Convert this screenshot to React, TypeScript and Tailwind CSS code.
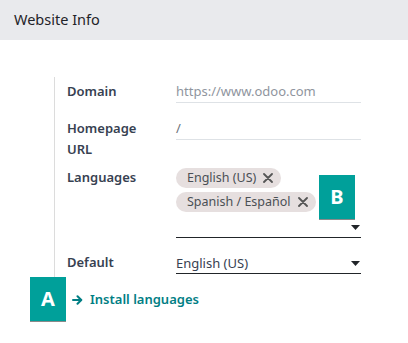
function Caret() {
  return (
    <svg width="9" height="5" viewBox="0 0 9 5" className="shrink-0">
      <path d="M0 0h9L4.5 5z" fill="#212529" />
    </svg>
  );
}

function Tag({ label }: { label: string }) {
  return (
    <span className="inline-flex items-center h-[20px] rounded-full bg-[#e6dfdf] pl-[11px] pr-[8px] text-[12.5px] text-[#4a4f55] leading-none">
      {label}
      <svg width="10" height="10" viewBox="0 0 10 10" className="ml-[7px]">
        <path d="M1 1l8 8M9 1l-8 8" stroke="#555" strokeWidth="1.8" strokeLinecap="round" />
      </svg>
    </span>
  );
}

function Badge({ letter }: { letter: string }) {
  return (
    <div className="absolute w-[36px] h-[45px] bg-[#00a09a] border-b border-[#8a8a8a] flex items-center justify-center text-white text-[20px] font-bold">
      {letter}
    </div>
  );
}

export default function App() {
  return (
    <div className="relative w-[408px] h-[343px] bg-white font-['Noto_Sans',sans-serif] text-[#212529] overflow-hidden">
      {/* Header */}
      <div className="h-[40px] bg-[#e9eaed] flex items-center px-[14px] text-[14.5px] text-[#1f2328]">
        Website Info
      </div>

      {/* Form */}
      <div className="ml-[54px] mt-[37px] border-l border-[#dcdcdc] pl-[12px] pt-[4px] h-[206px] text-[13px]">
        {/* Domain */}
        <div className="flex">
          <div className="w-[109px] leading-[21px] font-semibold text-[#374151]">Domain</div>
          <div className="w-[185px] h-[22px] border-b border-[#dee2e6] leading-[21px] text-[#8f959e]">
            https://www.odoo.com
          </div>
        </div>

        {/* Homepage URL */}
        <div className="flex mt-[15px]">
          <div className="w-[109px] leading-[21px] font-semibold text-[#374151]">
            Homepage
            <br />
            URL
          </div>
          <div className="w-[185px] h-[22px] border-b border-[#dee2e6] leading-[21px] text-[#6c727a]">/</div>
        </div>

        {/* Languages */}
        <div className="flex mt-[7px]">
          <div className="w-[109px] leading-[21px] font-semibold text-[#374151]">Languages</div>
          <div className="w-[185px] border-b border-[#212529]">
            <div className="flex flex-col items-start gap-[4px] pt-[1px]">
              <Tag label="English (US)" />
              <Tag label="Spanish / Español" />
            </div>
            <div className="h-[25px] flex items-center justify-end pr-[1px] pt-[6px]">
              <Caret />
            </div>
          </div>
        </div>

        {/* Default */}
        <div className="flex mt-[14px]">
          <div className="w-[109px] leading-[21px] font-semibold text-[#374151]">Default</div>
          <div className="w-[185px] h-[21px] border-b border-[#212529] flex items-center justify-between pr-[1px] mt-[1px]">
            <span className="leading-[21px] text-[#374151]">English (US)</span>
            <Caret />
          </div>
        </div>
      </div>

      {/* Install languages link */}
      <div className="flex items-center ml-[72px] mt-[6px] text-[13px] font-semibold text-[#017e84] leading-[21px]">
        <svg width="11" height="10" viewBox="0 0 11 10" className="mr-[7px]">
          <path d="M1 5h8M5.5 1.2L9.3 5 5.5 8.8" fill="none" stroke="#017e84" strokeWidth="2" strokeLinecap="round" strokeLinejoin="round" />
        </svg>
        Install languages
      </div>

      {/* Overlay badges */}
      <div className="absolute left-[319px] top-[175px]">
        <Badge letter="B" />
      </div>
      <div className="absolute left-[30px] top-[277px]">
        <Badge letter="A" />
      </div>
    </div>
  );
}
